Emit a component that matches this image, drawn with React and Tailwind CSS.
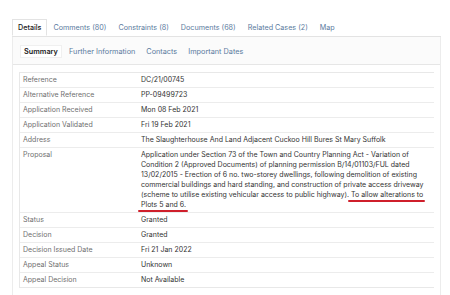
import React from 'react';

const tabs = ['Details', 'Comments (80)', 'Constraints (8)', 'Documents (68)', 'Related Cases (2)', 'Map'];
const subTabs = ['Further Information', 'Contacts', 'Important Dates'];

// red hand-drawn underline over the text
const Mark = ({ children }) => (
  <span className="relative">
    {children}
    <span className="absolute left-[-3px] right-[-2px] bottom-[-3px] h-[2px] rounded-full bg-[#cf1f2b]"></span>
  </span>
);

const rows = [
  ['Reference', 'DC/21/00745'],
  ['Alternative Reference', 'PP-09499723'],
  ['Application Received', 'Mon 08 Feb 2021'],
  ['Application Validated', 'Fri 19 Feb 2021'],
  ['Address', 'The Slaughterhouse And Land Adjacent Cuckoo Hill Bures St Mary Suffolk'],
  [
    'Proposal',
    <>
      Application under Section 73 of the Town and Country Planning Act - Variation of Condition 2 (Approved
      Documents) of planning permission B/14/01103/FUL dated 13/02/2015 - Erection of 6 no. two-storey dwellings,
      following demolition of existing commercial buildings and hard standing, and construction of private access
      driveway (scheme to utilise existing vehicular access to public highway). <Mark>To allow alterations to</Mark>{' '}
      <Mark>Plots 5 and 6.</Mark>
    </>,
  ],
  ['Status', 'Granted'],
  ['Decision', 'Granted'],
  ['Decision Issued Date', 'Fri 21 Jan 2022'],
  ['Appeal Status', 'Unknown'],
  ['Appeal Decision', 'Not Available'],
];

export default function App() {
  return (
    <div className="w-[450px] h-[295px] overflow-hidden bg-white pt-[19px] pl-[12px] pr-[9px] font-['Inter',sans-serif] text-[7px] leading-[10px]">
      {/* main tabs */}
      <div className="flex border-b border-[#e3e3e3] text-[7.2px]">
        {tabs.map((t, i) => (
          <div
            key={t}
            className={
              i === 0
                ? 'px-[5px] h-[17px] flex items-center bg-white border border-[#e3e3e3] border-b-white -mb-px text-[#222] font-medium'
                : 'px-[6px] h-[17px] flex items-center text-[#5a7a9e]'
            }
          >
            {t}
          </div>
        ))}
      </div>

      <div className="border-l border-r border-[#ececec] h-full">
        {/* sub tabs */}
        <div className="flex items-center px-[7px] pt-[8px] pb-[6px] bg-[#fbfbfb] border-b border-[#e6e6e6] text-[7.3px]">
          <div className="w-[42px] h-[13px] mr-[7px] flex items-center justify-center bg-white border border-[#f0f0f0] text-[#222] font-semibold">
            Summary
          </div>
          <div className="flex gap-[11px] text-[#5a7a9e]">
            {subTabs.map((t) => (
              <div key={t}>{t}</div>
            ))}
          </div>
        </div>

        {/* summary table */}
        <div className="mx-[6px] mt-[7px] border-t border-b border-l border-[#e8e8e8]">
          {rows.map(([label, value], i) => (
            <div key={label} className={'flex ' + (i > 0 ? 'border-t border-[#ececec]' : '')}>
              <div className="w-[118px] shrink-0 pl-[3px] py-[2px] text-[#6f6f6f]">{label}</div>
              <div className="flex-1 pl-[3px] pr-[6px] py-[2px] text-[#333]">{value}</div>
            </div>
          ))}
        </div>
        <div className="mx-[6px] mt-[8px] border-t border-[#e8e8e8]"></div>
      </div>
    </div>
  );
}
